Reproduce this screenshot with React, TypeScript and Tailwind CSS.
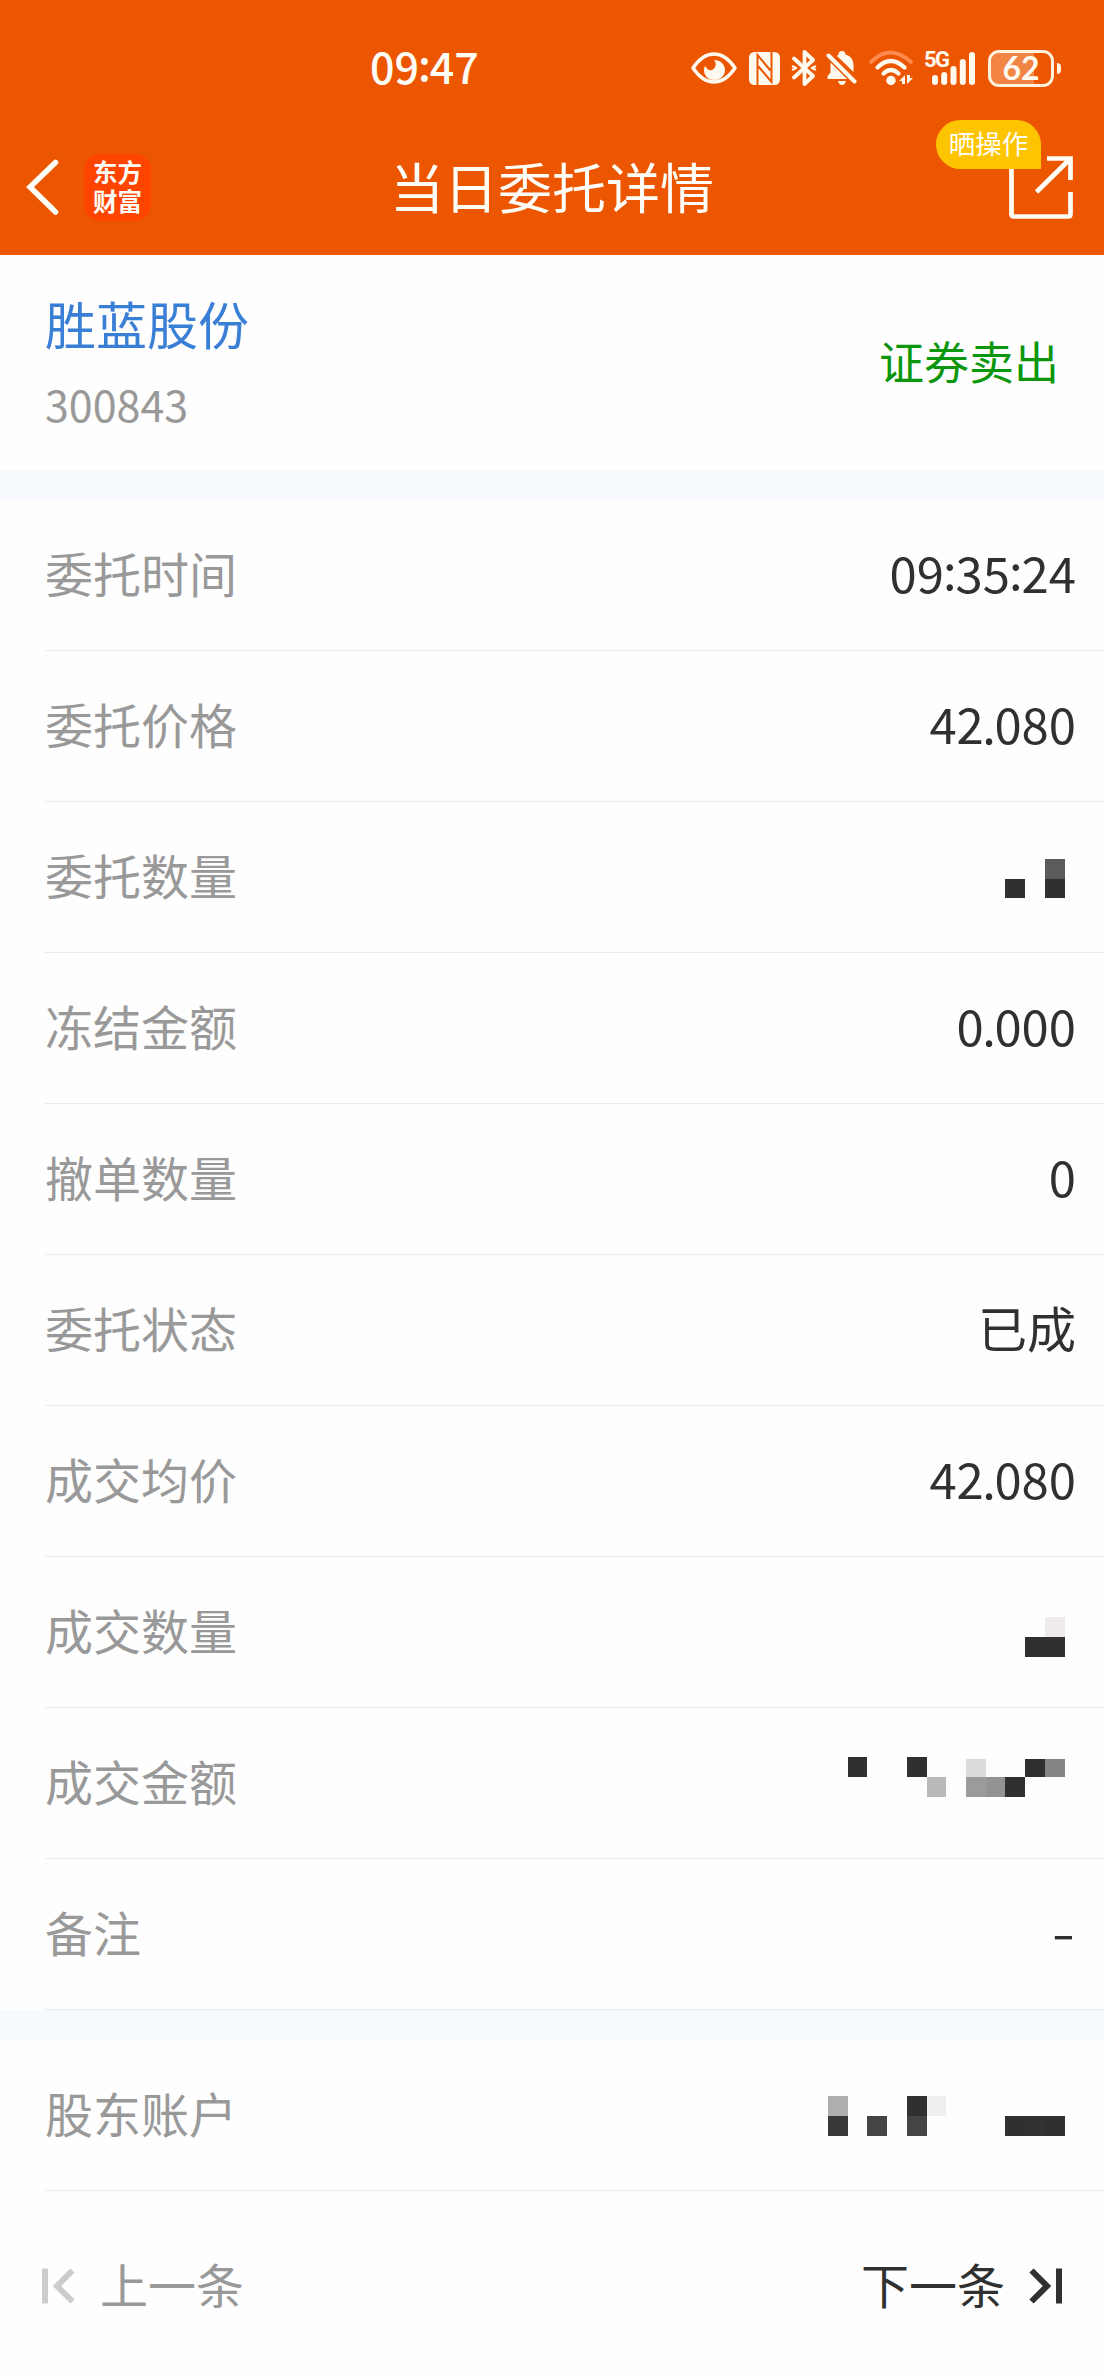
import type { ReactNode } from "react";

type Cell = { x: number; y: number; w: number; h: number; fill: string };

type Detail = {
  label: string;
  value?: string;
  cells?: Cell[];
};

const DARK = "#303030";

const details: Detail[] = [
  { label: "委托时间", value: "09:35:24" },
  { label: "委托价格", value: "42.080" },
  {
    label: "委托数量",
    cells: [
      { x: 180, y: 77, w: 20, h: 19, fill: DARK },
      { x: 220, y: 57, w: 20, h: 20, fill: "#5a5c59" },
      { x: 220, y: 77, w: 20, h: 19, fill: DARK },
    ],
  },
  { label: "冻结金额", value: "0.000" },
  { label: "撤单数量", value: "0" },
  { label: "委托状态", value: "已成" },
  { label: "成交均价", value: "42.080" },
  {
    label: "成交数量",
    cells: [
      { x: 220, y: 60, w: 20, h: 20, fill: "#eeeaed" },
      { x: 200, y: 80, w: 40, h: 20, fill: DARK },
    ],
  },
  {
    label: "成交金额",
    cells: [
      { x: 23, y: 49, w: 19, h: 20, fill: DARK },
      { x: 82, y: 49, w: 20, h: 20, fill: DARK },
      { x: 102, y: 69, w: 19, h: 20, fill: "#bbb9bb" },
      { x: 141, y: 51, w: 20, h: 18, fill: "#dddadd" },
      { x: 141, y: 69, w: 20, h: 20, fill: "#9b9c9a" },
      { x: 161, y: 69, w: 19, h: 20, fill: "#929491" },
      { x: 180, y: 69, w: 20, h: 20, fill: DARK },
      { x: 200, y: 51, w: 20, h: 18, fill: DARK },
      { x: 220, y: 51, w: 20, h: 18, fill: "#858684" },
    ],
  },
  { label: "备注", value: "-" },
];

const account: Detail = {
  label: "股东账户",
  cells: [
    { x: 3, y: 56, w: 20, h: 20, fill: "#aeaeae" },
    { x: 3, y: 76, w: 20, h: 20, fill: "#383838" },
    { x: 42, y: 76, w: 20, h: 20, fill: "#434542" },
    { x: 82, y: 56, w: 20, h: 20, fill: DARK },
    { x: 82, y: 76, w: 20, h: 20, fill: "#434542" },
    { x: 102, y: 56, w: 19, h: 20, fill: "#eeeeee" },
    { x: 180, y: 76, w: 20, h: 20, fill: DARK },
    { x: 200, y: 76, w: 20, h: 20, fill: "#30332f" },
    { x: 220, y: 76, w: 20, h: 20, fill: DARK },
  ],
};

// Punctuation sits a little tighter than the digits
const Figures = ({ text }: { text: string }) => (
  <>
    {text.split(/([:.])/).map((part, i) =>
      part === ":" || part === "." ? (
        <span key={i} className={part === ":" ? "relative -top-[3px] -mx-[1px]" : "-mx-[1.5px]"}>{part}</span>
      ) : (
        <span key={i}>{part}</span>
      )
    )}
  </>
);

const Masked = ({ cells }: { cells: Cell[] }) => (
  <svg width="240" height="150" viewBox="0 0 240 150" className="mr-[11px] block" shapeRendering="crispEdges">
    {cells.map((c, i) => (
      <rect key={i} x={c.x} y={c.y} width={c.w} height={c.h} fill={c.fill} />
    ))}
  </svg>
);

const Row = ({ label, value, cells }: Detail) => (
  <div className="pl-[45px]">
    <div className="flex h-[151px] items-center justify-between border-b border-[#ebebeb] pr-7">
      <span className="pb-[6px] text-[48px] leading-[60px] text-[#999999]">{label}</span>
      {cells ? (
        <Masked cells={cells} />
      ) : value === "-" ? (
        <span className="mr-[4px] inline-block scale-x-[1.4] pb-2 text-[48px] leading-[60px] text-[#303030]">-</span>
      ) : (
        <span className="pb-[6px] text-[49px] leading-[60px] text-[#303030]">
          <Figures text={value ?? ""} />
        </span>
      )}
    </div>
  </div>
);

const Gap = () => <div className="h-[30px] bg-[#f6faff]" />;

const StatusIcons = () => (
  <div className="flex h-10 items-center text-[#fffaf0]">
    <svg width="46" height="32" viewBox="0 0 46 32" fill="none">
      <path d="M2 16C8 7 15 2 23 2s15 5 21 14c-6 9-13 14-21 14S8 25 2 16Z" stroke="currentColor" strokeWidth="3.4" strokeLinejoin="round" />
      <path d="M23 8c6 0 11 4 11 10 0 5.500-4.500 10-10.500 10S13 24 13 18c0-2 .5-3 1.500-4 1 3 3.500 5 6.500 4 4-1.500 5-6.500 2-10Z" fill="currentColor" />
    </svg>
    <svg width="31" height="33" viewBox="0 0 31 33" className="ml-3" fill="none">
      <path d="M6 0h19q6 0 6 6v21q0 6-6 6H6q-6 0-6-6V6q0-6 6-6Z" fill="currentColor" />
      <path d="M8.500 33V3l13 15.500M22.500 0v30l-13-15.500" stroke="#ed5600" strokeWidth="2" />
    </svg>
    <svg width="26" height="36" viewBox="0 0 26 36" className="ml-[11px]" fill="none" stroke="currentColor" strokeWidth="3.800" strokeLinejoin="round" strokeLinecap="round">
      <path d="M3 8.500 22 26l-8.500 8V2L22 10 3 27.500" />
      <path d="M2 16.500 5 18l-3 1.500M24 16.500 21 18l3 1.500" strokeWidth="2.500" />
    </svg>
    <svg width="31" height="36" viewBox="0 0 31 36" className="ml-[9px]">
      <path d="M12.500 4.500a3.500 3.500 0 0 1 7 0C25 6 27.500 10 27.500 15v7L11 6Z" fill="currentColor" />
      <path d="M4.500 12.500 21 29H1.500v-2.500l3-4Z" fill="currentColor" />
      <path d="M12 31h8q-1 4-4 4t-4-4Z" fill="currentColor" />
      <path d="m2.500 5.500 26 26" stroke="currentColor" strokeWidth="4" strokeLinecap="round" />
    </svg>
    <svg width="45" height="36" viewBox="0 0 45 36" className="ml-3" fill="none" strokeLinecap="round">
      <path d="M2 12q19-19 40 0" stroke="#ff8a4f" strokeWidth="3.800" />
      <path d="M8.500 17.500q13-13 27 0" stroke="currentColor" strokeWidth="4.200" />
      <path d="M14.500 23.500q7.500-7 15 0" stroke="currentColor" strokeWidth="4.200" />
      <circle cx="22" cy="30.500" r="4.700" fill="currentColor" />
      <path d="m36 25-6 6h3v3h3ZM38 34l6-6h-3v-3h-3Z" fill="currentColor" />
    </svg>
    <div className="relative ml-[11px] h-[34px] w-[51px]">
      <span className="absolute -left-px -top-[3px] font-[Roboto] text-[22px] font-bold leading-6 tracking-[-1.500px]">5G</span>
      <svg width="51" height="34" viewBox="0 0 51 34" stroke="currentColor" strokeWidth="6" strokeLinecap="round">
        <path d="M10 27v4M19.200 24v7M28.500 18v13M37.800 11v20M47 4v27" />
      </svg>
    </div>
    <div className="relative ml-3 flex h-[37px] w-[66px] items-center justify-center overflow-hidden rounded-[11px] border-[3px] border-[#fff3df]">
      <div className="absolute inset-y-0 left-0 w-[43px] bg-[#fff3df]/30" />
      <span className="relative font-[Lato] text-[32px] font-bold leading-8">62</span>
    </div>
    <div className="ml-[3px] h-[11px] w-1 rounded-r-sm bg-[#fff3df]" />
  </div>
);

const Header = () => (
  <header className="h-[255px] bg-[#ed5600] text-[#fffdf8]">
    <div className="flex h-[136px] items-center justify-between pl-[370px] pr-[43px]">
      <span className="pb-[6px] text-[43px] font-medium leading-[50px]"><Figures text="09:47" /></span>
      <StatusIcons />
    </div>
    <div className="grid h-[119px] grid-cols-[1fr_auto_1fr] items-center pb-[17px]">
      <div className="flex items-center pl-[24px]">
        <svg width="36" height="58" viewBox="0 0 36 58" fill="none" stroke="currentColor" strokeWidth="5.500" strokeLinecap="round">
          <path d="M31.500 4.500 6 29l25.500 25" />
        </svg>
        <div className="ml-[24px] flex h-[67px] w-[67px] items-center justify-center rounded-2xl bg-[#ff4400] pb-[3px] text-[24.500px] font-bold leading-[29px]">
          <p>东方<br />财富</p>
        </div>
      </div>
      <h1 className="pb-[2px] text-[54px] leading-[64px]">当日委托详情</h1>
      <div className="flex justify-end pr-[31px]">
        <div className="relative pb-[2px]">
          <svg width="65" height="65" viewBox="0 0 65 65" fill="none" stroke="currentColor" strokeWidth="4.700">
            <path d="M3.500 5v55q0 2.500 2.500 2.500h54q2.500 0 2.500-2.500V38" />
            <path d="M39 4.500h23.500V26M62 5 28.500 38" />
          </svg>
          <span className="absolute -top-[34px] right-[32px] flex h-[49px] w-[105px] items-center justify-center whitespace-nowrap rounded-full rounded-br-none bg-[#ffc400] pb-[2px] text-[26.500px] leading-8">
            晒操作
          </span>
        </div>
      </div>
    </div>
  </header>
);

const Pager = ({ children, className }: { children: ReactNode; className: string }) => (
  <button className={`flex items-center text-[48px] leading-[60px] ${className}`}>{children}</button>
);

export default function App() {
  return (
    <div className="h-[2376px] w-[1104px] overflow-hidden bg-[#fefefe] font-['Noto_Sans_CJK_SC',sans-serif]">
      <Header />

      <section className="flex h-[215px] items-center justify-between pl-[45px] pr-[45px]">
        <div className="flex flex-col gap-[26px] pb-1">
          <span className="text-[51px] leading-[58px] text-[#3a7fd6]">胜蓝股份</span>
          <span className="text-[43px] leading-[50px] text-[#999999]">300843</span>
        </div>
        <span className="pb-1 text-[45px] leading-[60px] text-[#0c960c]">证券卖出</span>
      </section>

      <Gap />
      {details.map((d) => (
        <Row key={d.label} {...d} />
      ))}
      <Gap />
      <Row {...account} />

      <footer className="flex h-[185px] items-center justify-between pl-[42px] pr-[42px] pt-1">
        <Pager className="gap-[25px] text-[#999999]">
          <svg width="33" height="36" viewBox="0 0 33 36" fill="none" stroke="#cccccc" strokeWidth="6">
            <path d="M3 .5v35M30.500 2.500 15 18l15.500 15.500" />
          </svg>
          <span className="pb-[6px]">上一条</span>
        </Pager>
        <Pager className="gap-[24px] text-[#303030]">
          <span className="pb-[6px]">下一条</span>
          <svg width="33" height="36" viewBox="0 0 33 36" fill="none" stroke="currentColor" strokeWidth="6">
            <path d="M30 .5v35M2.500 2.500 18 18 2.500 33.500" />
          </svg>
        </Pager>
      </footer>
    </div>
  );
}
